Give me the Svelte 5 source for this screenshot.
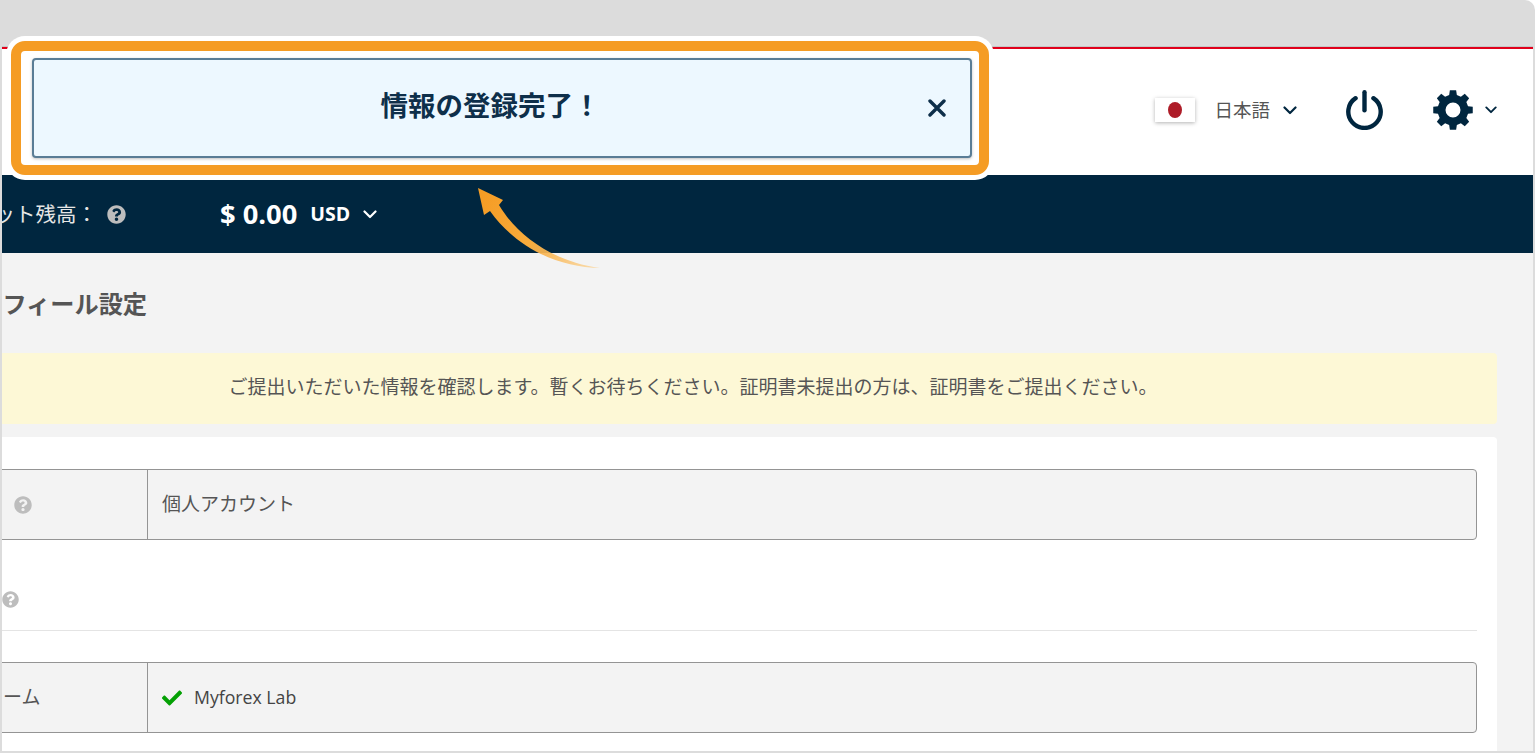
<script>
	// helper for the eight tooth settings cog
	function cogPath(teeth, outer, root, cx, cy) {
		const step = (Math.PI * 2) / teeth;
		const pts = [];
		for (let i = 0; i < teeth; i++) {
			const a = i * step - Math.PI / 2;
			const pt = (r, off) => [
				(cx + r * Math.cos(a + off)).toFixed(2),
				(cy + r * Math.sin(a + off)).toFixed(2)
			];
			pts.push(pt(root, -step * 0.32), pt(outer, -step * 0.2), pt(outer, step * 0.2), pt(root, step * 0.32));
		}
		return 'M' + pts.map((p) => p.join(' ')).join('L') + 'Z';
	}

	const cog = cogPath(8, 20, 15.5, 20, 20);
	const help =
		'M504 256c0 136.997-111.043 248-248 248S8 392.997 8 256C8 119.083 119.043 8 256 8s248 111.083 248 248zM262.655 90c-54.497 0-89.255 22.957-116.549 63.758-3.536 5.286-2.353 12.415 2.715 16.258l34.699 26.31c5.205 3.947 12.621 3.008 16.665-2.122 17.864-22.658 30.113-35.797 57.303-35.797 20.429 0 45.698 13.148 45.698 32.958 0 14.976-12.363 22.667-32.534 33.976C247.128 238.528 216 254.941 216 296v4c0 6.627 5.373 12 12 12h56c6.627 0 12-5.373 12-12v-1.346c0-28.462 83.186-29.647 83.186-106.654 0-57.999-60.162-102-116.531-102zM256 338c-25.365 0-46 20.635-46 46 0 25.364 20.635 46 46 46s46-20.636 46-46c0-25.365-20.635-46-46-46z';
	const check =
		'M173.898 439.404l-166.4-166.4c-9.997-9.997-9.997-26.206 0-36.204l36.203-36.204c9.997-9.998 26.207-9.998 36.204 0L192 312.69 432.095 72.596c9.997-9.997 26.207-9.997 36.204 0l36.203 36.204c9.997 9.997 9.997 26.206 0 36.204l-294.4 294.401c-9.998 9.997-26.207 9.997-36.204-.001z';
</script>

<div class="frame">
	<div class="chrome"></div>

	<div class="inner">
		<header class="topbar">
			<span class="flag"><i></i></span>
			<span class="lang">日本語</span>
			<svg class="chev lang-chev" viewBox="0 0 14 9"><path d="M1.5 1.5 7 7l5.5-5.5" /></svg>
			<svg class="power" viewBox="0 0 37 40">
				<path d="M9.6 8.2a16.2 16.2 0 1 0 17.8 0" />
				<path d="M18.5 2.2v18" />
			</svg>
			<svg class="gear" viewBox="0 0 40 40">
				<path fill-rule="evenodd" d="{cog}M20 12.5a7.5 7.5 0 1 0 0 15a7.5 7.5 0 1 0 0-15Z" />
			</svg>
			<svg class="chev gear-chev" viewBox="0 0 14 9"><path d="M1.5 1.5 7 7l5.5-5.5" /></svg>
		</header>

		<div class="wallet">
			<span class="wallet-label">ウォレット残高：</span>
			<svg class="help wallet-help" viewBox="0 0 512 512"><path d={help} /></svg>
			<span class="amount">$ 0.00</span>
			<span class="currency">USD</span>
			<svg class="chev wallet-chev" viewBox="0 0 14 9"><path d="M1.5 1.5 7 7l5.5-5.5" /></svg>
		</div>

		<main class="content">
			<h1>プロフィール設定</h1>
			<div class="notice">ご提出いただいた情報を確認します。暫くお待ちください。証明書未提出の方は、証明書をご提出ください。</div>
			<section class="card">
				<div class="row">
					<div class="label">
						<span class="cjk">口座種別</span>
						<svg class="help" viewBox="0 0 512 512"><path d={help} /></svg>
					</div>
					<div class="value"><span class="cjk">個人アカウント</span></div>
				</div>
				<div class="section-head">
					<span>ユーザー名</span>
					<svg class="help" viewBox="0 0 512 512"><path d={help} /></svg>
				</div>
				<div class="row">
					<div class="label"><span class="cjk">ニックネーム</span></div>
					<div class="value">
						<svg class="check" viewBox="0 0 512 512"><path d={check} /></svg>
						<span class="latin">Myforex Lab</span>
					</div>
				</div>
			</section>
		</main>
	</div>

	<!-- highlight laid over the screenshot -->
	<div class="callout">
		<div class="alert">
			<strong>情報の登録完了！</strong>
			<svg class="close" viewBox="0 0 18 18"><path d="M2 2l14 14M16 2 2 16" /></svg>
		</div>
	</div>
	<svg class="arrow" viewBox="0 0 140 95">
		<defs>
			<linearGradient id="tail" gradientUnits="userSpaceOnUse" x1="15" y1="15" x2="125" y2="88">
				<stop offset="0" stop-color="#f59c24" />
				<stop offset="0.5" stop-color="#f8ab3c" />
				<stop offset="1" stop-color="#fbd08c" stop-opacity="0.75" />
			</linearGradient>
		</defs>
		<path fill="url(#tail)" d="M8 13 33 25 29 30C48 62 85 87 130 93 90 92 48 75 20 36L14 40Z" />
	</svg>
</div>

<style>
	:global(body) {
		background: #fff;
	}

	.frame {
		position: relative;
		display: flex;
		flex-direction: column;
		box-sizing: border-box;
		width: 1535px;
		height: 753px;
		padding: 0 2px 2px;
		overflow: hidden;
		background: #dcdcdc;
		border-top-right-radius: 10px;
		font-family: 'Open Sans', 'Noto Sans CJK JP', sans-serif;
		font-size: 19px;
		color: #555;
	}

	.chrome {
		flex: none;
		height: 46px;
		border-bottom: 1px solid #c6c6c6;
	}

	.inner {
		flex: 1;
		min-height: 0;
		display: flex;
		flex-direction: column;
		overflow: hidden;
		background: #f3f3f3;
		border-top: 2px solid #e0001b;
	}

	.topbar {
		flex: none;
		display: flex;
		align-items: center;
		justify-content: flex-end;
		box-sizing: border-box;
		height: 126px;
		padding: 0 36px 4px 0;
		background: #fff;
	}

	.flag {
		display: flex;
		align-items: center;
		justify-content: center;
		width: 40px;
		height: 24px;
		background: #fff;
		box-shadow: 0 1px 4px rgba(0, 0, 0, 0.3);
	}

	.flag i {
		width: 14px;
		height: 16px;
		border-radius: 50%;
		background: #ae1c28;
	}

	.lang {
		margin-left: 19px;
		font-size: 18.5px;
		line-height: 1;
	}

	.chev {
		fill: none;
		stroke-width: 2.2;
		stroke-linecap: round;
		stroke-linejoin: round;
	}

	.lang-chev {
		width: 14px;
		height: 9px;
		margin-left: 13px;
		stroke: #00263f;
	}

	.power {
		width: 37px;
		height: 40px;
		margin-left: 49px;
		fill: none;
		stroke: #00263f;
		stroke-width: 4.4;
		stroke-linecap: round;
	}

	.gear {
		width: 40px;
		height: 40px;
		margin-left: 50px;
		fill: #00263f;
	}

	.gear-chev {
		width: 12px;
		height: 8px;
		margin-left: 12px;
		stroke: #00263f;
	}

	.wallet {
		flex: none;
		display: flex;
		align-items: center;
		height: 78px;
		margin-left: -69px;
		background: #00263f;
		color: #e6e6e6;
	}

	.wallet-label {
		width: 164px;
		margin-bottom: 2px;
		font-size: 20.5px;
		white-space: nowrap;
	}

	.help {
		flex: none;
		fill: #bdbdbd;
	}

	.wallet-help {
		width: 19px;
		height: 19px;
		margin-left: 10px;
	}

	.amount {
		margin-left: 94px;
		margin-bottom: 2px;
		font-size: 27.3px;
		font-weight: 700;
		color: #fff;
	}

	.currency {
		margin-left: 13px;
		margin-bottom: 2px;
		font-size: 19.5px;
		font-weight: 700;
		color: #fff;
	}

	.wallet-chev {
		width: 14px;
		height: 9px;
		margin-left: 13px;
		stroke: #fff;
	}

	.content {
		flex: 1;
		min-height: 0;
		margin-left: -121px;
		padding-right: 36px;
	}

	h1 {
		margin: 0;
		padding: 34px 0 0 73px;
		height: 66px;
		box-sizing: border-box;
		font-size: 24.2px;
		line-height: 34px;
		font-weight: 700;
		white-space: nowrap;
	}

	.notice {
		display: flex;
		align-items: center;
		justify-content: center;
		box-sizing: border-box;
		height: 71px;
		margin-top: 34px;
		padding: 0 0 5px 8px;
		border-radius: 4px;
		background: #fdf8d6;
	}

	.card {
		box-sizing: border-box;
		height: 320px;
		margin-top: 13px;
		padding: 32px 20px 0;
		border-radius: 4px;
		background: #fff;
	}

	.row {
		display: flex;
		box-sizing: border-box;
		height: 71px;
		border: 1px solid #949494;
		border-radius: 4px;
		background: #f3f3f3;
	}

	.label {
		flex: none;
		display: flex;
		align-items: center;
		gap: 11px;
		box-sizing: border-box;
		width: 246px;
		padding-left: 25px;
		border-right: 1px solid #949494;
		white-space: nowrap;
	}

	.label .help {
		width: 18px;
		height: 18px;
	}

	.cjk {
		margin-bottom: 3px;
	}

	.value {
		display: flex;
		align-items: center;
		padding-left: 14px;
	}

	.section-head {
		display: flex;
		align-items: center;
		gap: 6px;
		box-sizing: border-box;
		height: 91px;
		padding-top: 29px;
		border-bottom: 1px solid #e4e4e4;
		margin-bottom: 31px;
		white-space: nowrap;
	}

	.section-head .help {
		width: 17px;
		height: 17px;
	}

	.check {
		width: 20px;
		height: 20px;
		fill: #04a004;
	}

	.latin {
		margin-left: 12px;
		margin-bottom: 2px;
		font-size: 17.7px;
		color: #444;
	}

	.callout {
		position: absolute;
		left: 11px;
		top: 41px;
		box-sizing: border-box;
		width: 978px;
		height: 134px;
		padding: 7px 7px 7px 11px;
		border: 10px solid #f59c24;
		border-radius: 14px;
		background: #fff;
		box-shadow: 0 0 0 5px #fff;
	}

	.alert {
		display: flex;
		align-items: center;
		box-sizing: border-box;
		height: 100px;
		padding: 0 24px 0 19px;
		border: 2px solid #5a7d96;
		border-radius: 4px;
		background: #edf8ff;
		box-shadow: 0 1px 3px rgba(0, 0, 0, 0.25);
	}

	.alert strong {
		flex: 1;
		padding-bottom: 8px;
		text-align: center;
		font-size: 27.5px;
		color: #0e2f4a;
	}

	.close {
		width: 18px;
		height: 18px;
		fill: none;
		stroke: #0e2f4a;
		stroke-width: 3.4;
		stroke-linecap: round;
	}

	.arrow {
		position: absolute;
		left: 470px;
		top: 175px;
		width: 140px;
		height: 95px;
		overflow: visible;
	}
</style>
